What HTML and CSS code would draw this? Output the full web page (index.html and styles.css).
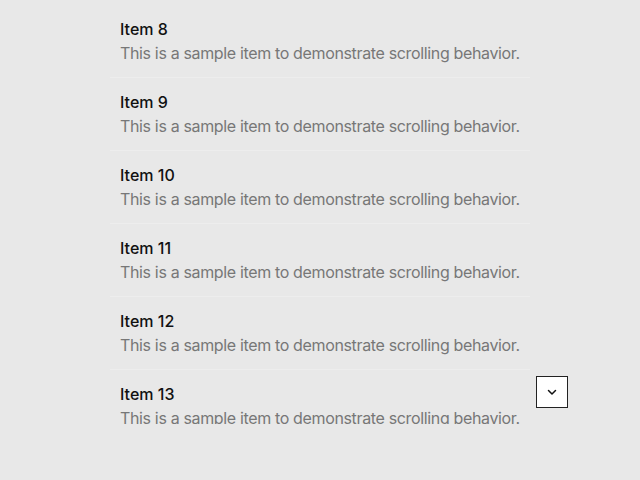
FILE: index.html
```html
<!DOCTYPE html>
<html>
<head>
<meta charset="utf-8">
<link rel="stylesheet" href="styles.css">
</head>
<body>
<div class="viewport">
  <ul class="list">
    <li class="item"><div class="title">Item 8</div><div class="desc">This is a sample item to demonstrate scrolling behavior.</div></li>
    <li class="item"><div class="title">Item 9</div><div class="desc">This is a sample item to demonstrate scrolling behavior.</div></li>
    <li class="item"><div class="title">Item 10</div><div class="desc">This is a sample item to demonstrate scrolling behavior.</div></li>
    <li class="item"><div class="title">Item 11</div><div class="desc">This is a sample item to demonstrate scrolling behavior.</div></li>
    <li class="item"><div class="title">Item 12</div><div class="desc">This is a sample item to demonstrate scrolling behavior.</div></li>
    <li class="item"><div class="title">Item 13</div><div class="desc">This is a sample item to demonstrate scrolling behavior.</div></li>
  </ul>
</div>
<button class="scroll-btn" aria-label="Scroll down">
  <svg width="12" height="12" viewBox="0 0 12 12"><path d="M2.5 4.5 L6 8 L9.5 4.5" fill="none" stroke="#111" stroke-width="1.5" stroke-linecap="round" stroke-linejoin="round"/></svg>
</button>
</body>
</html>
```
FILE: styles.css
```css
html, body {
  margin: 0;
  padding: 0;
  background: #e8e8e8;
  font-family: Inter, "Noto Sans", sans-serif;
}
.viewport {
  width: 420px;
  height: 424px;
  margin: 0 auto;
  overflow: hidden;
}
.list {
  list-style: none;
  margin: 5px 0 0;
  padding: 0;
}
.item {
  padding: 12px 10px;
  border-bottom: 1px solid #ededed;
}
.title {
  font-size: 16px;
  line-height: 24px;
  font-weight: 500;
  color: #111;
  white-space: nowrap;
}
.desc {
  font-size: 16px;
  line-height: 24px;
  letter-spacing: -0.35px;
  color: #777;
  white-space: nowrap;
}
.scroll-btn {
  position: absolute;
  left: 536px;
  top: 376px;
  width: 32px;
  height: 32px;
  padding: 0;
  background: #fff;
  border: 1px solid #222;
  border-radius: 0;
  display: flex;
  align-items: center;
  justify-content: center;
}
```
